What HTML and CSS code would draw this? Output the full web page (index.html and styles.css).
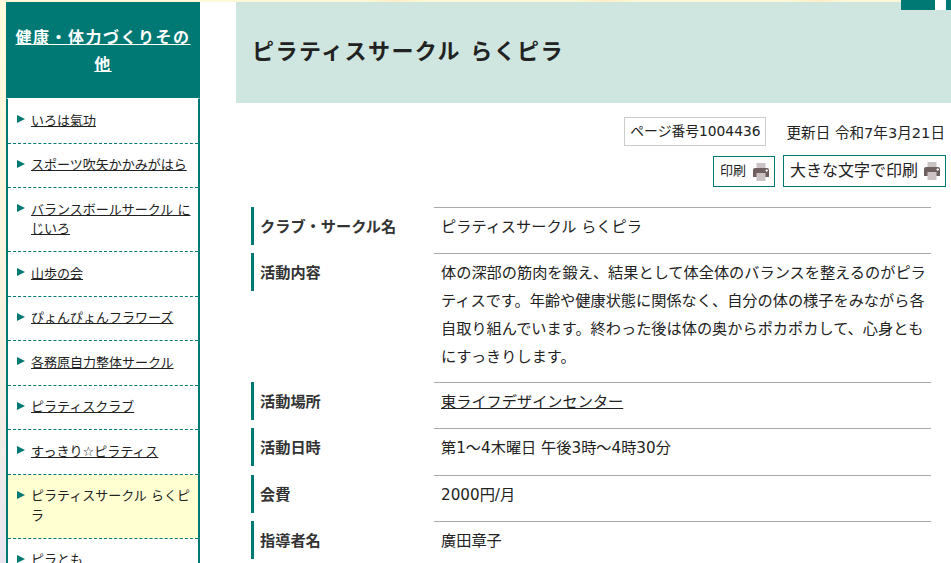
FILE: index.html
```html
<!DOCTYPE html>
<html lang="ja">
<head>
<meta charset="utf-8">
<title>ピラティスサークル らくピラ</title>
<link rel="stylesheet" href="styles.css">
</head>
<body>
<div class="top-strip"><span class="tab-a"></span><span class="tab-b"></span><span class="tab-c"></span></div>
<div class="page">
  <nav class="side">
    <h2 class="side-title"><a href="#">健康・体力づくりその他</a></h2>
    <ul class="side-list">
      <li><a href="#">いろは氣功</a></li>
      <li><a href="#">スポーツ吹矢かかみがはら</a></li>
      <li><a href="#">バランスボールサークル にじいろ</a></li>
      <li><a href="#">山歩の会</a></li>
      <li><a href="#">ぴょんぴょんフラワーズ</a></li>
      <li><a href="#">各務原自力整体サークル</a></li>
      <li><a href="#">ピラティスクラブ</a></li>
      <li><a href="#">すっきり☆ピラティス</a></li>
      <li class="current"><span>ピラティスサークル らくピラ</span></li>
      <li><a href="#">ピラとも</a></li>
    </ul>
  </nav>
  <main class="main">
    <h1 class="title">ピラティスサークル らくピラ</h1>
    <div class="meta">
      <span class="page-no">ページ番号1004436</span>
      <span class="updated">更新日 令和7年3月21日</span>
    </div>
    <div class="prints">
      <a class="print small" href="#">印刷<svg class="pr" viewBox="0 0 16 18"><rect x="3.500" y="0" width="9" height="5" fill="#cbc3c3"/><path d="M2 5h12a2 2 0 0 1 2 2v7h-16v-7a2 2 0 0 1 2-2z" fill="#6f6060"/><rect x="3.500" y="10" width="9" height="8" fill="#cbc3c3"/><path d="M12.500 7.500h2.500M13.700 6.300v2.500" stroke="#fff" stroke-width="1"/></svg></a>
      <a class="print" href="#">大きな文字で印刷<svg class="pr" viewBox="0 0 16 18"><rect x="3.500" y="0" width="9" height="5" fill="#cbc3c3"/><path d="M2 5h12a2 2 0 0 1 2 2v7h-16v-7a2 2 0 0 1 2-2z" fill="#6f6060"/><rect x="3.500" y="10" width="9" height="8" fill="#cbc3c3"/><path d="M12.500 7.500h2.500M13.700 6.300v2.500" stroke="#fff" stroke-width="1"/></svg></a>
    </div>
    <table class="info">
      <tr><th><div class="label">クラブ・サークル名</div></th><td>ピラティスサークル らくピラ</td></tr>
      <tr><th><div class="label">活動内容</div></th><td class="long">体の深部の筋肉を鍛え、結果として体全体のバランスを整えるのがピラティスです。年齢や健康状態に関係なく、自分の体の様子をみながら各自取り組んでいます。終わった後は体の奥からポカポカして、心身ともにすっきりします。</td></tr>
      <tr><th><div class="label">活動場所</div></th><td><a href="#">東ライフデザインセンター</a></td></tr>
      <tr><th><div class="label">活動日時</div></th><td>第1～4木曜日 午後3時～4時30分</td></tr>
      <tr><th><div class="label">会費</div></th><td>2000円/月</td></tr>
      <tr><th><div class="label">指導者名</div></th><td>廣田章子</td></tr>
    </table>
  </main>
</div>
</body>
</html>
```
FILE: styles.css
```css
html, body { margin: 0; padding: 0; height: 563px; overflow: hidden; }
body {
  font-family: "DejaVu Sans", "Noto Sans CJK JP", sans-serif;
  color: #222;
  background: #fff;
  position: relative;
}
a { color: #222; }
.top-strip {
  height: 2px;
  background: linear-gradient(90deg, #fdf9d8 0, #fdf9d8 360px, #fdeec8 394px, #fdf9d8 430px, #fdf9d8 570px, #fdeec8 606px, #fdf9d8 640px, #fdf9d8 785px, #fdeec8 818px, #fdf9d8 850px);
  position: relative;
}
.tab-a, .tab-b, .tab-c { position: absolute; top: 0; height: 10px; }
.tab-a { left: 901px; width: 34px; background: #007874; }
.tab-b { left: 935px; width: 11px; background: #fff; }
.tab-c { left: 946px; width: 5px; background: #007874; }
.page {
  display: flex;
  align-items: flex-start;
  padding-left: 6px;
  background:
    linear-gradient(90deg, transparent 0, transparent 6px, #fff 6px),
    linear-gradient(180deg, #fffbdc 0, #f5f2e2 60%, #e9e6f0 100%);
  height: 561px;
}
.side { width: 194px; flex: none; margin-right: 36px; }
.side-title {
  margin: 0;
  height: 96px;
  box-sizing: border-box;
  padding: 22px 8px 0;
  background: #007874;
  text-align: center;
  font-size: 16px;
  font-weight: 700;
  line-height: 27px;
  letter-spacing: 1.5px;
}
.side-title a { color: #fff; }
.side-list {
  list-style: none;
  margin: 0;
  padding: 0;
  border-left: 2px solid #007874;
  border-right: 2px solid #007874;
  border-top: 1px dashed #fff;
  font-size: 13px;
  line-height: 19.5px;
  background: #fff;
}
.side-list li {
  padding: 11.500px 4px 12.500px 23px;
  border-bottom: 1px dashed #007874;
  position: relative;
}
.side-list li::before {
  content: "";
  position: absolute;
  left: 9px;
  top: 16px;
  border-left: 8px solid #007874;
  border-top: 4px solid transparent;
  border-bottom: 4px solid transparent;
}
.side-list .current { background: #ffffd2; }
.main { flex: 1; min-width: 0; background: #fff; height: 561px; }
.title {
  margin: 0;
  height: 101px;
  box-sizing: border-box;
  padding: 32px 17px 0 16px;
  background: #cfe5df;
  font-size: 22px;
  line-height: 36px;
  font-weight: 700;
  letter-spacing: 1.45px;
}
.meta {
  display: flex;
  justify-content: flex-end;
  align-items: center;
  gap: 20px;
  padding: 14px 6px 0 0;
}
.page-no { border: 1px solid #ccc; padding: 4px 5px; line-height: 19px; font-size: 13.800px; }
.updated { font-size: 14.600px; }
.prints {
  display: flex;
  justify-content: flex-end;
  align-items: flex-end;
  gap: 8px;
  padding: 9px 5px 0 0;
}
.print {
  display: flex;
  align-items: center;
  gap: 6px;
  border: 1px solid #007874;
  text-decoration: none;
  height: 26px;
  padding: 0 5px 4px 6px;
  font-size: 16px;
}
.print.small { font-size: 13px; height: 25px; gap: 7px; }
.pr { width: 16px; height: 18px; margin-top: 4px; }
.info {
  border-collapse: separate;
  border-spacing: 0 8px;
  margin: 12px 0 0 15px;
  width: 680px;
  font-size: 15.2px;
  line-height: 28px;
  table-layout: fixed;
}
.info th {
  width: 183px;
  padding: 0;
  text-align: left;
  vertical-align: top;
  font-weight: 700;
  color: #333;
}
.label {
  border-left: 3px solid #007874;
  padding: 6px 0 4px 6px;
}
.info td {
  border-top: 1px solid #aaa;
  padding: 5px 0 4.200px 7px;
  vertical-align: top;
}
.info td.long { padding-bottom: 3px; }
```
